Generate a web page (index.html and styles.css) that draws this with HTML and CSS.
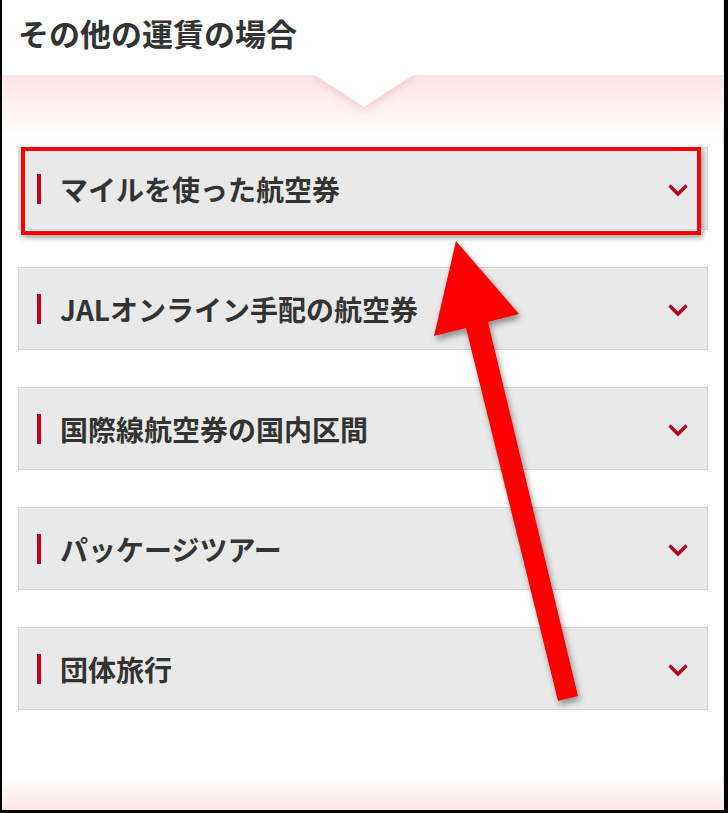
FILE: index.html
```html
<!DOCTYPE html>
<html lang="ja">
<head>
<meta charset="utf-8">
<link rel="stylesheet" href="styles.css">
</head>
<body>
<div class="page">
  <header class="head">
    <h1 class="title">その他の運賃の場合</h1>
    <svg class="notch" width="140" height="60" viewBox="0 0 140 60">
      <defs>
        <filter id="ns" x="-30%" y="-30%" width="160%" height="180%">
          <feDropShadow dx="0" dy="3" stdDeviation="4" flood-color="#e8a8a8" flood-opacity="0.55"/>
        </filter>
      </defs>
      <polygon points="19,0 121,0 70,33" fill="#fff" filter="url(#ns)"/>
      <rect x="0" y="0" width="140" height="1" fill="#fff"/>
    </svg>
  </header>
  <section class="list">
    <div class="item">
      <span class="bar"></span>
      <span class="label">マイルを使った航空券</span>
      <svg class="chev" width="22" height="14" viewBox="0 0 22 14"><path d="M2.5 2.5 L11 11 L19.5 2.5" fill="none" stroke="#b8001f" stroke-width="3.4"/></svg>
    </div>
    <div class="item">
      <span class="bar"></span>
      <span class="label">JALオンライン手配の航空券</span>
      <svg class="chev" width="22" height="14" viewBox="0 0 22 14"><path d="M2.5 2.5 L11 11 L19.5 2.5" fill="none" stroke="#b8001f" stroke-width="3.4"/></svg>
    </div>
    <div class="item">
      <span class="bar"></span>
      <span class="label">国際線航空券の国内区間</span>
      <svg class="chev" width="22" height="14" viewBox="0 0 22 14"><path d="M2.5 2.5 L11 11 L19.5 2.5" fill="none" stroke="#b8001f" stroke-width="3.4"/></svg>
    </div>
    <div class="item">
      <span class="bar"></span>
      <span class="label">パッケージツアー</span>
      <svg class="chev" width="22" height="14" viewBox="0 0 22 14"><path d="M2.5 2.5 L11 11 L19.5 2.5" fill="none" stroke="#b8001f" stroke-width="3.4"/></svg>
    </div>
    <div class="item">
      <span class="bar"></span>
      <span class="label">団体旅行</span>
      <svg class="chev" width="22" height="14" viewBox="0 0 22 14"><path d="M2.5 2.5 L11 11 L19.5 2.5" fill="none" stroke="#b8001f" stroke-width="3.4"/></svg>
    </div>
  </section>
  <div class="highlight"></div>
  <svg class="arrow" width="722" height="810" viewBox="2 0 722 810">
    <defs>
      <filter id="as" x="-20%" y="-20%" width="140%" height="140%">
        <feDropShadow dx="2" dy="4" stdDeviation="3" flood-color="#000" flood-opacity="0.4"/>
      </filter>
    </defs>
    <polygon points="558,701 578,696 488,322 519,314 456,241 434,336 466,328" fill="#ff0000" filter="url(#as)"/>
  </svg>
</div>
</body>
</html>
```

FILE: styles.css
```css
html, body {
  margin: 0;
  padding: 0;
  background: #000;
}

.page {
  position: relative;
  margin-left: 2px;
  width: 721px;
  height: 810px;
  overflow: hidden;
  background: linear-gradient(to bottom,
    #fff 0px, #fff 75px,
    #fbe4e4 75px, #fff 140px,
    #fff 775px, #fde7e7 810px);
  border-right: 1px solid #e6e6e6;
  font-family: "Noto Sans CJK JP", "Noto Sans", sans-serif;
  color: #333;
}

.head {
  position: relative;
  height: 75px;
  padding-left: 16px;
  box-sizing: border-box;
}

.title {
  margin: 0;
  padding-top: 12px;
  font-size: 31px;
  line-height: 42px;
  font-weight: 700;
  color: #333;
  letter-spacing: 0;
}

.notch {
  position: absolute;
  left: 292px;
  top: 74px;
}

.list {
  display: flex;
  flex-direction: column;
  gap: 37px;
  margin: 72px 15px 0 16px;
}

.item {
  display: flex;
  align-items: center;
  height: 83px;
  box-sizing: border-box;
  background: #e9e9e9;
  border: 1px solid #d6d6d6;
  padding: 0 18px 0 18px;
}

.bar {
  width: 4px;
  height: 30px;
  background: #c4001f;
  flex: none;
}

.label {
  flex: 1;
  margin-left: 19px;
  font-size: 28px;
  font-weight: 700;
  line-height: 36px;
  color: #333;
}

.chev {
  flex: none;
  margin-top: 2px;
}

.highlight {
  position: absolute;
  left: 19px;
  top: 147px;
  width: 680px;
  height: 88px;
  box-sizing: border-box;
  border: 4px solid #ff0000;
  box-shadow: 2px 3px 5px rgba(0, 0, 0, 0.35);
}

.arrow {
  position: absolute;
  left: 0;
  top: 0;
}
```
